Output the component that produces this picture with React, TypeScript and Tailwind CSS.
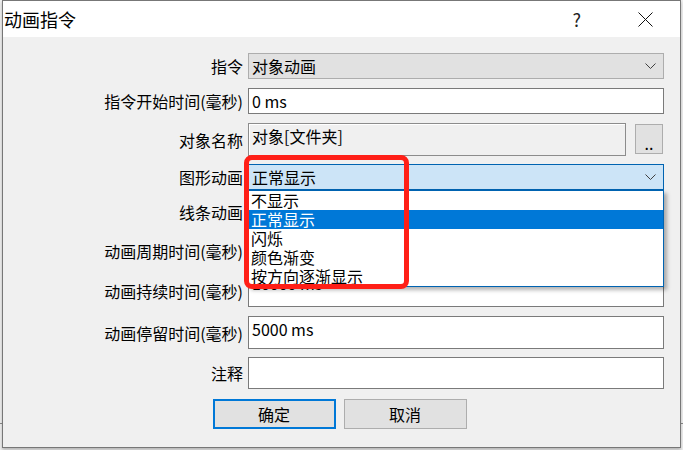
import type { ReactNode } from "react";

const options = ["不显示", "正常显示", "闪烁", "颜色渐变", "按方向逐渐显示"];

function Chevron() {
  return (
    <svg width="11" height="6" viewBox="0 0 11 6" className="shrink-0">
      <polyline points="0.5,0.5 5.5,5.5 10.5,0.5" fill="none" stroke="#404040" strokeWidth="1" />
    </svg>
  );
}

function Row({ label, h, mt, children }: { label: string; h: string; mt: string; children: ReactNode }) {
  return (
    <div className={`flex items-center ${h} ${mt}`}>
      <div className="w-[241px] shrink-0 text-right pr-[1px] whitespace-nowrap">{label}</div>
      <div className="ml-[4px] w-[416px] h-full flex">{children}</div>
    </div>
  );
}

function Combo({ value, focused }: { value: string; focused?: boolean }) {
  return (
    <div
      className={`w-full h-full flex items-center justify-between pl-[3px] pr-[7px] border ${
        focused ? "bg-[#cce4f7] border-[#0063b1]" : "bg-[#e1e1e1] border-[#adadad]"
      }`}
    >
      <span>{value}</span>
      <Chevron />
    </div>
  );
}

function TextBox({ value, tall, lift }: { value?: string; tall?: boolean; lift?: boolean }) {
  return (
    <div
      className={`w-full h-full bg-white border border-[#7a7a7a] pl-[3px] flex ${
        tall ? "items-start leading-[22px]" : "items-center"
      } ${tall ? (lift ? "pt-0 -mt-0" : "pt-[1px]") : ""}`}
    >
      <span className={lift ? "relative -top-[4px]" : ""}>{value}</span>
    </div>
  );
}

export default function App() {
  return (
    <div className="w-[683px] h-[450px] bg-[#f0f0f0] overflow-hidden relative font-['Noto_Sans_CJK_SC',sans-serif] text-[16px] text-black leading-[20px]">
      <div className="absolute left-0 top-[423px] w-[2px] h-px bg-[#8a8a8a]" />
      <div className="absolute right-0 top-[423px] w-[2px] h-px bg-[#8a8a8a]" />
      <div className="ml-[2px] w-[679px] h-[448px] border border-[#777777] bg-[#f0f0f0] flex flex-col shadow-[0_2px_3px_rgba(0,0,0,0.25)] relative">
        <div className="h-[36px] bg-white flex items-center shrink-0">
          <span className="ml-[1px] text-[18px]">动画指令</span>
          <span className="ml-auto mr-[57px] text-[18px] text-[#222]">?</span>
          <svg width="15" height="15" viewBox="0 0 15 15" className="mr-[27px]">
            <line x1="0.5" y1="0.5" x2="14.5" y2="14.5" stroke="#111" strokeWidth="1" />
            <line x1="14.5" y1="0.5" x2="0.5" y2="14.5" stroke="#111" strokeWidth="1" />
          </svg>
        </div>

        <div className="flex flex-col pt-[16px]">
          <Row label="指令" h="h-[26px]" mt="mt-0">
            <Combo value="对象动画" />
          </Row>
          <Row label="指令开始时间(毫秒)" h="h-[26px]" mt="mt-[9px]">
            <TextBox value="0 ms" />
          </Row>
          <Row label="对象名称" h="h-[33px]" mt="mt-[9px]">
            <div className="w-[378px] h-full bg-[#f0f0f0] border border-[#8c8c8c] shadow-[inset_1px_1px_0_#ffffff] pl-[3px] pt-[1px] leading-[22px]">
              对象[文件夹]
            </div>
            <div className="ml-[9px] mt-[1px] w-[28px] h-[30px] bg-[#e1e1e1] border border-[#adadad] flex items-end justify-center pb-[5px] leading-[10px]">
              ..
            </div>
          </Row>
          <Row label="图形动画" h="h-[26px]" mt="mt-[8px]">
            <div className="relative w-full h-full">
              <Combo value="正常显示" focused />
              <div className="absolute left-0 top-full w-full h-[97px] bg-white border border-[#0063b1] shadow-[3px_3px_4px_rgba(0,0,0,0.3)] z-10 flex flex-col">
                {options.map((o, i) => (
                  <div
                    key={o}
                    className={`h-[19px] pl-[2px] leading-[19px] ${i === 1 ? "bg-[#0078d7] text-white" : ""}`}
                  >
                    {o}
                  </div>
                ))}
              </div>
              <div className="absolute left-[-4px] top-[-9px] w-[165px] h-[134px] border-[5px] border-[#ff1f17] rounded-[8px] z-20 pointer-events-none" />
            </div>
          </Row>
          <Row label="线条动画" h="h-[26px]" mt="mt-[9px]">
            <Combo value="正常显示" />
          </Row>
          <Row label="动画周期时间(毫秒)" h="h-[33px]" mt="mt-[9px]">
            <TextBox value="1000 ms" tall />
          </Row>
          <Row label="动画持续时间(毫秒)" h="h-[32px]" mt="mt-[8px]">
            <TextBox value="10000 ms" tall lift />
          </Row>
          <Row label="动画停留时间(毫秒)" h="h-[33px]" mt="mt-[9px]">
            <TextBox value="5000 ms" tall />
          </Row>
          <Row label="注释" h="h-[32px]" mt="mt-[8px]">
            <TextBox tall />
          </Row>

          <div className="flex justify-center gap-[8px] mt-[10px] pr-[4px]">
            <button className="w-[123px] h-[30px] bg-[#e1e1e1] border-2 border-[#0078d7] flex items-center justify-center">
              确定
            </button>
            <button className="w-[123px] h-[30px] bg-[#e1e1e1] border border-[#adadad] flex items-center justify-center">
              取消
            </button>
          </div>
        </div>
      </div>
    </div>
  );
}
